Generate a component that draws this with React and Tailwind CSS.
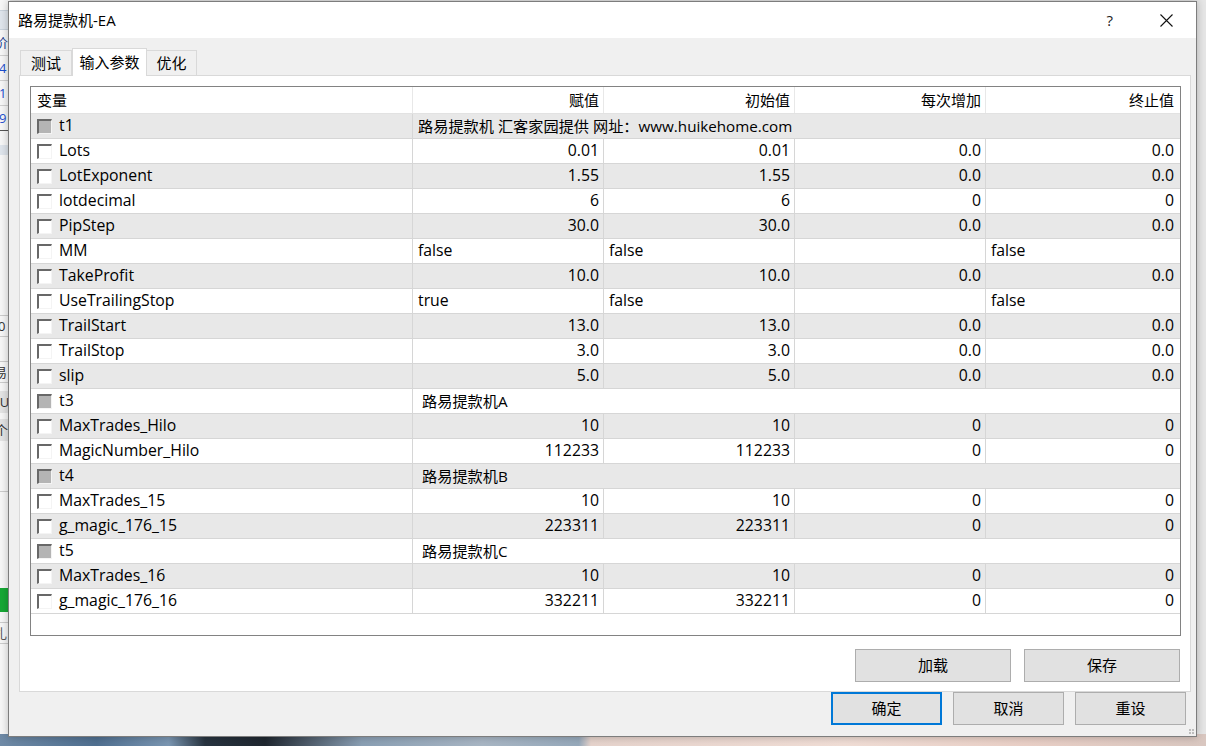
import React from 'react';

const font = "font-['Open_Sans','Noto_Sans_CJK_SC',sans-serif]";

const rows = [
  { name: 't1', group: true, note: '路易提款机 汇客家园提供 网址：www.huikehome.com' },
  { name: 'Lots', v: ['0.01', '0.01', '0.0', '0.0'] },
  { name: 'LotExponent', v: ['1.55', '1.55', '0.0', '0.0'] },
  { name: 'lotdecimal', v: ['6', '6', '0', '0'] },
  { name: 'PipStep', v: ['30.0', '30.0', '0.0', '0.0'] },
  { name: 'MM', bool: true, v: ['false', 'false', '', 'false'] },
  { name: 'TakeProfit', v: ['10.0', '10.0', '0.0', '0.0'] },
  { name: 'UseTrailingStop', bool: true, v: ['true', 'false', '', 'false'] },
  { name: 'TrailStart', v: ['13.0', '13.0', '0.0', '0.0'] },
  { name: 'TrailStop', v: ['3.0', '3.0', '0.0', '0.0'] },
  { name: 'slip', v: ['5.0', '5.0', '0.0', '0.0'] },
  { name: 't3', group: true, note: '路易提款机A', indent: true },
  { name: 'MaxTrades_Hilo', v: ['10', '10', '0', '0'] },
  { name: 'MagicNumber_Hilo', v: ['112233', '112233', '0', '0'] },
  { name: 't4', group: true, note: '路易提款机B', indent: true },
  { name: 'MaxTrades_15', v: ['10', '10', '0', '0'] },
  { name: 'g_magic_176_15', v: ['223311', '223311', '0', '0'] },
  { name: 't5', group: true, note: '路易提款机C', indent: true },
  { name: 'MaxTrades_16', v: ['10', '10', '0', '0'] },
  { name: 'g_magic_176_16', v: ['332211', '332211', '0', '0'] },
];

const CheckBox = ({ filled }) => (
  <span
    className={`inline-block h-[15px] w-[15px] shrink-0 border-t-2 border-l-2 border-r border-b border-t-[#686868] border-l-[#686868] border-r-[#f4f4f4] border-b-[#f4f4f4] ${
      filled ? 'bg-[#b4b4b4]' : 'bg-white'
    }`}
  />
);

function ParamRow({ row, index }) {
  const shade = index % 2 === 0 ? 'bg-[#e8e8e8]' : 'bg-white';

  return (
    <div className={`grid h-[25px] grid-cols-[382px_191px_191px_191px_192px] border-b border-[#d6d6d6] text-[15.8px] ${shade}`}>
      <div className="flex items-center gap-[7px] border-r border-[#d6d6d6] pl-[6px]">
        <CheckBox filled={row.group} />
        <span>{row.name}</span>
      </div>
      {row.group ? (
        <div className={`col-span-4 flex items-center whitespace-nowrap text-[15.2px] ${row.indent ? 'pl-[9px]' : 'pl-[5px]'}`}>
          {row.note}
        </div>
      ) : (
        row.v.map((val, i) => (
          <div
            key={i}
            className={`flex items-center ${i < 3 ? 'border-r border-[#d6d6d6]' : ''} ${
              row.bool ? 'justify-start pl-[5px]' : 'justify-end pr-[4px]'
            }`}
          >
            {val}
          </div>
        ))
      )}
    </div>
  );
}

const Btn = ({ children, className = '', focused = false }) => (
  <button
    className={`flex items-center justify-center bg-[#e1e1e1] text-[15px] text-black ${
      focused ? 'border-2 border-[#0078d7]' : 'border border-[#adadad]'
    } ${className}`}
  >
    {children}
  </button>
);

export default function App() {
  return (
    <div className={`relative h-[746px] w-[1206px] overflow-hidden bg-[#e6e6e6] ${font} text-[15px] text-black`}>
      {/* other window peeking out behind the dialog */}
      <div className="absolute left-0 top-0 flex h-full w-[10px] flex-col bg-[#f7f7f7] text-[13px] leading-none">
        <div className="mt-[10px] h-[20px] border-y border-[#c9d2dc] bg-[#dfe5ec]" />
        <div className="flex h-[26px] items-center border-b border-[#d0d0d0] text-[#1d3f91]">
          <span className="-ml-[5px]">价</span>
        </div>
        <div className="flex h-[25px] items-center border-b border-[#d0d0d0] text-[#1d4fd0]">
          <span className="-ml-[1px]">4</span>
        </div>
        <div className="flex h-[25px] items-center border-b border-[#d0d0d0] text-[#1d4fd0]">
          <span className="-ml-[1px]">1</span>
        </div>
        <div className="flex h-[25px] items-center border-b border-[#555] text-[#1d4fd0]">
          <span className="-ml-[1px]">9</span>
        </div>
        <div className="mt-[14px] h-[10px] bg-[#dfe5ec]" />
        <div className="mt-[160px] flex h-[22px] items-center border-y border-[#ccc] text-[#333]">
          <span className="-ml-[2px]">0</span>
        </div>
        <div className="mt-[24px] flex h-[22px] items-center border-y border-[#ccc] text-[#333]">
          <span className="-ml-[6px]">易</span>
        </div>
        <div className="mt-[8px] flex h-[22px] items-center bg-[#e4e4e4] text-[#333]">
          <span className="-ml-[4px]">IU</span>
        </div>
        <div className="mt-[6px] flex h-[22px] items-center bg-[#e4e4e4] text-[#333]">
          <span className="-ml-[5px]">个</span>
        </div>
        <div className="mt-[50px] h-px bg-[#ccc]" />
        <div className="mt-[96px] h-[24px] bg-[#17a835]" />
        <div className="mt-[10px] flex h-[22px] items-center border-y border-[#ccc] text-[#555]">
          <span className="-ml-[6px]">扎</span>
        </div>
      </div>
      <div className="absolute bottom-0 left-0 h-[12px] w-full bg-[linear-gradient(90deg,#6f8aa6_0%,#4f6f90_8%,#7a96b2_14%,#283440_17%,#1f2730_22%,#8a9fb4_30%,#a8b6c4_40%,#96a9bb_48%,#e6d3cc_49%,#f0ddd5_70%,#e9cfc6_85%,#d9c7c0_100%)]" />

      {/* dialog window */}
      <div className="absolute left-[8px] top-[1px] flex h-[736px] w-[1189px] flex-col border border-[#7d7d7d] bg-[#f0f0f0] shadow-[0_0_8px_rgba(0,0,0,0.25)]">
        <div className="flex h-[36px] shrink-0 items-center bg-white pl-[9px]">
          <span>路易提款机-EA</span>
          <span className="ml-auto mr-[47px] text-[15px] text-[#222]">?</span>
          <svg width="13" height="13" viewBox="0 0 13 13" className="mr-[23px]">
            <path d="M0.5 0.5 L12.5 12.5 M12.5 0.5 L0.5 12.5" stroke="#111" strokeWidth="1.1" fill="none" />
          </svg>
        </div>

        <div className="flex items-end pl-[11px] pt-[10px]">
          <div className="flex h-[25px] w-[52px] items-center justify-center border border-b-0 border-[#d9d9d9] bg-[#f0f0f0]">
            测试
          </div>
          <div className="-mb-px relative z-10 flex h-[28px] w-[75px] items-center justify-center border border-b-0 border-[#d9d9d9] bg-white">
            输入参数
          </div>
          <div className="flex h-[25px] w-[50px] items-center justify-center border border-b-0 border-l-0 border-[#d9d9d9] bg-[#f0f0f0]">
            优化
          </div>
        </div>

        <div className="ml-[10px] flex h-[617px] w-[1172px] flex-col border border-[#d9d9d9] bg-white pl-[10px] pr-[10px] pt-[10px]">
          <div className="h-[550px] w-[1151px] border border-[#828282] bg-white">
            <div className="grid h-[27px] grid-cols-[382px_191px_191px_191px_192px] border-b border-[#e2e2e2] bg-white">
              <div className="flex items-center border-r border-[#e8e8e8] pl-[6px]">变量</div>
              <div className="flex items-center justify-end border-r border-[#e8e8e8] pr-[4px]">赋值</div>
              <div className="flex items-center justify-end border-r border-[#e8e8e8] pr-[4px]">初始值</div>
              <div className="flex items-center justify-end border-r border-[#e8e8e8] pr-[4px]">每次增加</div>
              <div className="flex items-center justify-end pr-[4px]">终止值</div>
            </div>
            {rows.map((row, i) => (
              <ParamRow key={row.name} row={row} index={i} />
            ))}
          </div>

          <div className="mt-[13px] flex justify-end gap-[13px]">
            <Btn className="h-[33px] w-[156px]">加载</Btn>
            <Btn className="h-[33px] w-[156px]">保存</Btn>
          </div>
        </div>

        <div className="flex justify-end gap-[11px] pr-[10px]">
          <Btn focused className="h-[33px] w-[111px]">确定</Btn>
          <Btn className="h-[33px] w-[111px]">取消</Btn>
          <Btn className="h-[33px] w-[111px]">重设</Btn>
        </div>

        <div className="absolute bottom-[2px] right-[2px] grid grid-cols-2 gap-[1px]">
          <span className="h-[2px] w-[2px] bg-[#bdbdbd]" />
          <span className="h-[2px] w-[2px] bg-[#bdbdbd]" />
          <span className="h-[2px] w-[2px] bg-[#bdbdbd]" />
          <span className="h-[2px] w-[2px] bg-[#bdbdbd]" />
        </div>
      </div>
    </div>
  );
}
